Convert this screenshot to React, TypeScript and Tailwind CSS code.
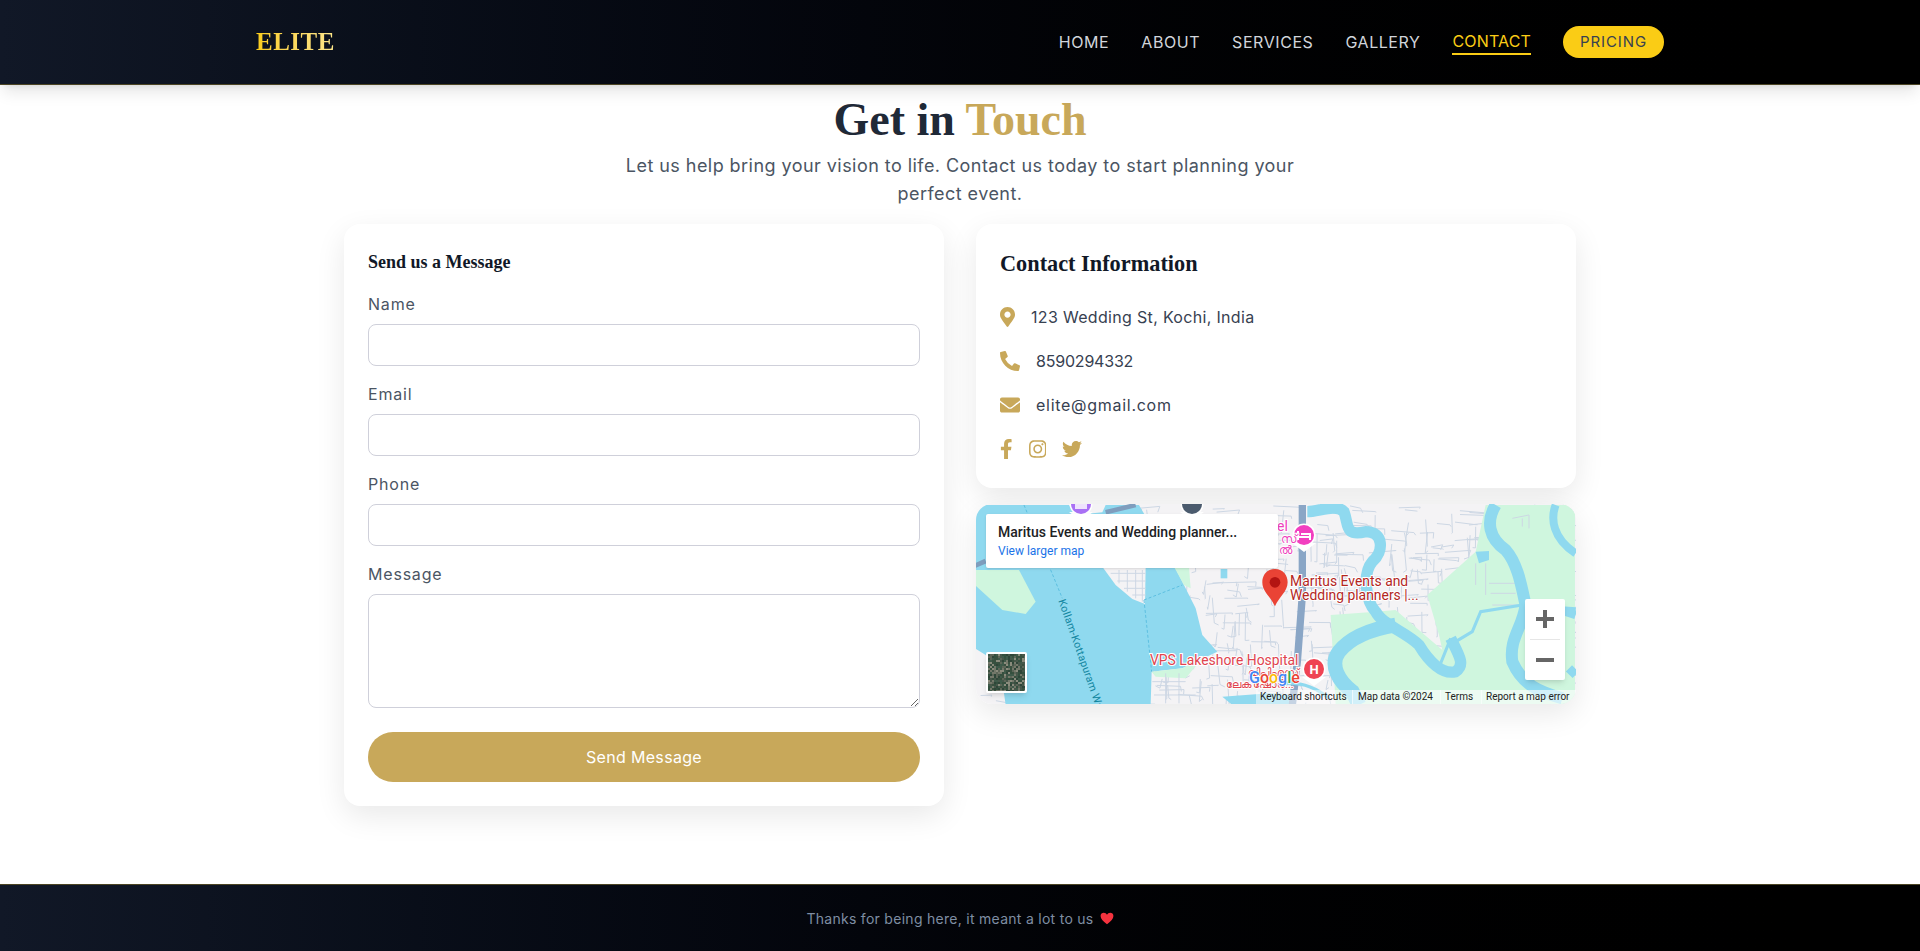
import React from "react";
import { FaMapMarkerAlt, FaPhoneAlt, FaEnvelope, FaFacebookF, FaInstagram, FaTwitter } from "react-icons/fa";

const LAND = "#f4f3f5";
const WATER = "#8fd9ef";
const GREEN = "#cff6de";
const ROAD = "#cdd7e4";

function rng(seed: number) {
  let s = seed;
  return () => {
    s = (s * 16807) % 2147483647;
    return s / 2147483647;
  };
}

function streets() {
  const r = rng(4242);
  const out: string[] = [];
  for (let i = 0; i < 720; i++) {
    const x = r() * 600;
    const y = r() * 200;
    const len = 8 + r() * 20;
    const horizontal = r() > 0.5;
    const a = (r() - 0.5) * 5;
    const x2 = horizontal ? x + len : x + a;
    const y2 = horizontal ? y + a : y + len;
    const x3 = x2 + (horizontal ? a : 5 * (r() - 0.5) * 2);
    const y3 = y2 + (horizontal ? 6 * r() : a);
    out.push(`M${x.toFixed(1)},${y.toFixed(1)}L${x2.toFixed(1)},${y2.toFixed(1)}L${x3.toFixed(1)},${y3.toFixed(1)}`);
  }
  return out.join("");
}

function Pin({ cx, cy, fill, children }: { cx: number; cy: number; fill: string; children?: React.ReactNode }) {
  return (
    <g>
      <path d={`M${cx - 12},${cy + 8} L${cx},${cy + 17} L${cx + 12},${cy + 8} Z`} fill="#fff" />
      <circle cx={cx} cy={cy} r="11.5" fill="#fff" />
      <circle cx={cx} cy={cy} r="10" fill={fill} />
      {children}
    </g>
  );
}

function Satellite() {
  const r = rng(77);
  const cols = ["#3f5a4a", "#5d6658", "#34503f", "#74786a", "#47574a", "#39503f", "#8a8b7c", "#2f4639"];
  const cells: React.ReactNode[] = [];
  for (let y = 0; y < 38; y += 2) {
    for (let x = 0; x < 38; x += 2) {
      cells.push(<rect key={`${x}-${y}`} x={x} y={y} width="2" height="2" fill={cols[Math.floor(r() * cols.length)]} />);
    }
  }
  return (
    <svg width="37" height="37" viewBox="0 0 37 37" className="block">
      {cells}
    </svg>
  );
}

function MapPicture() {
  const sans = "Roboto, 'Liberation Sans', 'Noto Sans', sans-serif";
  return (
    <svg width="600" height="200" viewBox="0 0 600 200" className="block" fontFamily={sans}>
      <rect width="600" height="200" fill={LAND} />
      <path d={streets()} fill="none" stroke={ROAD} strokeWidth="1" />
      {/* left half */}
      <g transform="translate(-7,-9) scale(0.3333)">
        <path
          d="M18,30 L510,30 L620,220 L645,270 L680,340 L700,420 L745,470 L640,520 L548,530 L545,630 L110,630 L100,560 L50,480 L18,460 Z"
          fill={WATER}
        />
        <path d="M300,30 L410,30 L400,52 L320,60 Z" fill={LAND} />
        <path d="M18,225 L150,225 L200,320 L170,357 L100,345 L18,270 Z" fill={GREEN} />
        <path d="M615,215 L660,215 L665,280 L645,270 Z" fill={GREEN} />
        <path d="M548,530 L640,520 L700,490 L650,550 L560,545 Z" fill={GREEN} />
        <path d="M400,215 L530,215 L528,327 L490,312 L440,270 Z" fill={LAND} />
        <path d="M425,235H530M445,258H530M465,280H530M490,300H530M450,225V265M475,225V290M500,225V310M520,225V320" stroke={ROAD} strokeWidth="3" fill="none" />
        <path d="M550,560H650M590,535V625M630,535V625M555,600H680" stroke={ROAD} strokeWidth="3" fill="none" />
        <path d="M165,30 L280,310 M525,315 L640,270 M525,315 L548,530" stroke="#5cbfe0" strokeWidth="3" strokeDasharray="9 6" fill="none" />
        <path d="M410,52 L500,30" stroke="#7f9dbd" strokeWidth="14" fill="none" />
        <path d="M18,212 L50,198" stroke="#7f9dbd" strokeWidth="14" fill="none" />
        <path d="M760,605 L900,595 L960,600 L960,630 L790,630 Z" fill={WATER} />
        <rect x="755" y="222" width="20" height="28" fill={WATER} />
        <g transform="translate(268,317) rotate(70.5)">
          <text fontSize="32" fill="#12869f" letterSpacing="1">
            Kollam-Kottapuram Water
          </text>
        </g>
      </g>
      {/* right half */}
      <g transform="translate(293,-9) scale(0.3333)">
        <path d="M475,300 L620,170 L650,30 L918,30 L918,630 L200,630 L185,360 L320,350 L380,345 L520,465 L510,420 Z" fill={GREEN} />
        <path d="M620,170 L660,168 L660,195 L630,205 Z" fill={WATER} />
        <path d="M620,205V270M650,205V300M660,265H740M665,295H740M670,330H745" stroke={ROAD} strokeWidth="3" fill="none" />
        <path d="M730,70L780,60V100M760,70V95" stroke={ROAD} strokeWidth="3" fill="none" />
        <path d="M100,30 L100,300 L85,500 L70,630" stroke="#8aa6c6" strokeWidth="22" fill="none" />
        <path
          d="M115,50 C150,50 200,25 225,50 C240,90 225,125 290,110 C345,110 345,170 310,200 C280,235 290,320 320,350 C340,390 410,410 450,450 C480,500 520,540 560,530 C590,510 570,480 545,430"
          fill="none"
          stroke={WATER}
          strokeWidth="34"
        />
        <path d="M380,390 C320,400 250,420 210,470 C180,510 210,560 250,590 L270,630" fill="none" stroke={WATER} strokeWidth="44" />
        <path d="M505,530 L545,430 M560,440 L610,410 L635,350 L760,330" fill="none" stroke={WATER} strokeWidth="9" />
        <path
          d="M680,30 C650,80 660,130 710,165 C750,210 760,290 770,330 C760,400 720,430 730,500 C760,570 810,590 880,610"
          fill="none"
          stroke={WATER}
          strokeWidth="36"
        />
        <path d="M860,30 C845,70 850,130 920,175" fill="none" stroke={WATER} strokeWidth="24" />
        <path d="M890,350 L920,360 M900,520 L920,540 M780,340 L920,350" fill="none" stroke={WATER} strokeWidth="26" />
        <path d="M0,575 C60,555 120,560 180,610" fill="none" stroke={WATER} strokeWidth="10" />
      </g>
      {/* pins */}
      <Pin cx={105} cy={0} fill="#a970f5">
        <path d="M99,-2h12v7h-12z" fill="#fff" opacity="0.8" />
      </Pin>
      <Pin cx={216} cy={0} fill="#4b5b6e" />
      <Pin cx={328} cy={31} fill="#f23fc0">
        <path d="M322,27v9M322,33h12v3M325,30h9v3" stroke="#fff" strokeWidth="2" fill="none" />
      </Pin>
      <Pin cx={338} cy={165} fill="#ef4353">
        <text x={338} y={170} fontSize="13" fontWeight="700" fill="#fff" textAnchor="middle">H</text>
      </Pin>
      {/* labels */}
      <text x={301} y={27} fontSize="14" fill="#ee3fbc" stroke="#fff" strokeWidth="2" paintOrder="stroke">el</text>
      <text x={305} y={39} fontSize="12" fill="#ee3fbc" stroke="#fff" strokeWidth="2" paintOrder="stroke">സ്</text>
      <text x={303} y={50} fontSize="12" fill="#ee3fbc" stroke="#fff" strokeWidth="2" paintOrder="stroke">ൽ</text>
      <text x={174} y={161} fontSize="13.9" fill="#e0444f" stroke="#fff" strokeWidth="2" paintOrder="stroke">
        VPS Lakeshore Hospital
      </text>
      <text x={272} y={172} fontSize="11" fill="#e0444f" stroke="#fff" strokeWidth="2" paintOrder="stroke">വിപിഎസ്</text>
      <text x={250} y={184} fontSize="11" fill="#e0444f" stroke="#fff" strokeWidth="2" paintOrder="stroke">ലേക്‌ഷോർ...</text>
      <text x={314} y={82} fontSize="13.9" fill="#b3261e" stroke="#fff" strokeWidth="2" paintOrder="stroke">
        Maritus Events and
      </text>
      <text x={314} y={96} fontSize="13.9" fill="#b3261e" stroke="#fff" strokeWidth="2" paintOrder="stroke">
        Wedding planners |...
      </text>
      {/* marker */}
      <g transform="translate(-7,-9) scale(0.3333)">
        <path d="M918,222 C892,222 880,242 880,262 C880,290 905,305 918,334 C931,305 956,290 956,262 C956,242 944,222 918,222 Z" fill="#ea4335" />
        <circle cx="918" cy="262" r="16" fill="#b31412" />
      </g>
      {/* google */}
      <text x={273} y={179} fontSize="16" fontWeight="500" stroke="#fff" strokeWidth="1.5" paintOrder="stroke">
        <tspan fill="#4285f4">G</tspan>
        <tspan fill="#ea4335">o</tspan>
        <tspan fill="#fbbc05">o</tspan>
        <tspan fill="#4285f4">g</tspan>
        <tspan fill="#34a853">l</tspan>
        <tspan fill="#ea4335">e</tspan>
      </text>
    </svg>
  );
}

function MapCard() {
  return (
    <div className="relative h-[200px] overflow-hidden rounded-2xl shadow-[0_10px_30px_rgba(0,0,0,0.09)] font-['Roboto',sans-serif]">
      <MapPicture />
      <div className="absolute left-[10px] top-[10px] h-[54px] w-[292px] rounded-[2px] bg-white px-[12px] pt-[9px] shadow-sm">
        <div className="text-[14px] leading-[18px] font-medium text-[#202124]">Maritus Events and Wedding planner...</div>
        <div className="pt-px text-[12px] leading-[18px] text-[#1a73e8]">View larger map</div>
      </div>
      <div className="absolute left-[10px] top-[148px] h-[41px] w-[41px] rounded-[2px] border-2 border-white shadow-md">
        <Satellite />
      </div>
      <div className="absolute left-[549px] top-[95px] flex h-[81px] w-[40px] flex-col items-center rounded-[2px] bg-white shadow-md">
        <svg width="40" height="40" viewBox="0 0 40 40">
          <path d="M11 18h18v4H11zM18 11h4v18h-4z" fill="#666" />
        </svg>
        <div className="h-px w-[30px] bg-[#e6e6e6]" />
        <svg width="40" height="40" viewBox="0 0 40 40">
          <path d="M11 18h18v4H11z" fill="#666" />
        </svg>
      </div>
      <div className="absolute bottom-0 left-[280px] right-0 flex h-[14px] items-center text-[10px] leading-[14px] text-[#222]">
        <span className="w-[96px] pl-[4px] bg-white/50 whitespace-nowrap">Keyboard shortcuts</span>
        <span className="w-[88px] pl-[5px] bg-white/60 border-l border-white/60 whitespace-nowrap">Map data ©2024</span>
        <span className="w-[41px] pl-[4px] bg-white/60 border-l border-white/60">Terms</span>
        <span className="flex-1 pl-[4px] bg-white/60 border-l border-white/60 whitespace-nowrap">Report a map error</span>
      </div>
    </div>
  );
}

function Field({ label, area }: { label: string; area?: boolean }) {
  return (
    <div>
      <label className="mb-[8px] block text-[16px] leading-[24px] tracking-[0.05em] text-[#4b5563]">{label}</label>
      {area ? (
        <textarea className="mb-[24px] block h-[114px] w-full rounded-lg border border-[#cfd0da] bg-white" />
      ) : (
        <input className="mb-[16px] block h-[42px] w-full rounded-lg border border-[#cfd0da] bg-white" />
      )}
    </div>
  );
}

const navItems = ["HOME", "ABOUT", "SERVICES", "GALLERY"];
const cardShadow = "shadow-[0_10px_30px_rgba(0,0,0,0.09)]";

export default function App() {
  return (
    <div className="flex min-h-screen flex-col bg-white font-['Inter',sans-serif]">
      <header className="relative z-10 h-[85px] border-b border-[#4b4423] bg-gradient-to-r from-[#111827] to-black shadow-lg">
        <div className="mx-auto flex h-[84px] max-w-[1408px] items-center justify-between">
          <div className="bg-gradient-to-r from-[#facc15] to-[#fde68a] bg-clip-text font-['Liberation_Serif',serif] text-[25px] font-bold tracking-[0.02em] text-transparent">
            ELITE
          </div>
          <nav className="flex items-center gap-8 text-[16px] tracking-[0.035em]">
            {navItems.map((n) => (
              <a key={n} className="text-[#d1d5db]">{n}</a>
            ))}
            <a className="border-b-2 border-[#facc15] leading-[24px] tracking-[0.01em] text-[#facc15]">CONTACT</a>
            <a className="flex h-[32px] w-[101px] items-center justify-center rounded-full bg-[#facc15] text-[15px] tracking-[0.06em] text-[#374151]">PRICING</a>
          </nav>
        </div>
      </header>

      <main className="flex-1 pb-[78px]">
        <div className="pt-[11px] text-center">
          <h1 className="font-['Liberation_Serif',serif] text-[46px] leading-[48px] font-bold text-[#1f2937]">
            Get in <span className="text-[#c8a85a]">Touch</span>
          </h1>
          <p className="mx-auto mt-[8px] max-w-[672px] text-[18px] leading-[28px] tracking-[0.025em] text-[#4b5563]">
            Let us help bring your vision to life. Contact us today to start planning your perfect event.
          </p>
        </div>

        <div className="mx-auto mt-[16px] grid w-[1232px] grid-cols-[600px_600px] gap-x-[32px]">
          <section className={`rounded-2xl bg-white px-6 pt-6 pb-6 ${cardShadow}`}>
            <h3 className="mb-[16px] font-['Liberation_Serif',serif] text-[18px] leading-[28px] font-semibold text-[#111827]">
              Send us a Message
            </h3>
            <Field label="Name" />
            <Field label="Email" />
            <Field label="Phone" />
            <Field label="Message" area />
            <button className="h-[50px] w-full rounded-full bg-[#c8a85a] text-[16px] tracking-[0.02em] text-white">Send Message</button>
          </section>

          <div className="flex flex-col gap-4">
            <section className={`h-[264px] rounded-2xl bg-white px-6 pt-6 ${cardShadow}`}>
              <h3 className="mb-[25px] font-['Liberation_Serif',serif] text-[22.3px] leading-[32px] font-semibold text-[#111827]">
                Contact Information
              </h3>
              <div className="flex flex-col gap-5 text-[16px] leading-[24px] text-[#374151]">
                <div className="flex items-center gap-4">
                  <FaMapMarkerAlt className="h-[20px] w-[15px] text-[#c8a85a]" />
                  <span className="tracking-[0.02em]">123 Wedding St, Kochi, India</span>
                </div>
                <div className="flex items-center gap-4">
                  <FaPhoneAlt className="text-[20px] text-[#c8a85a]" />
                  <span className="tracking-[-0.0125em]">8590294332</span>
                </div>
                <div className="flex items-center gap-4">
                  <FaEnvelope className="text-[20px] text-[#c8a85a]" />
                  <span className="tracking-[0.045em]">elite@gmail.com</span>
                </div>
                <div className="flex h-[24px] items-center gap-4 text-[#c8a85a]">
                  <FaFacebookF className="h-[20px] w-[12.5px]" />
                  <FaInstagram className="h-[20px] w-[17.5px]" />
                  <FaTwitter className="h-[20px] w-[20px]" />
                </div>
              </div>
            </section>
            <MapCard />
          </div>
        </div>
      </main>

      <footer className="flex h-[68px] items-center justify-center gap-[6px] border-t border-[#4b4423] bg-gradient-to-r from-[#111827] to-black text-[14px] tracking-[0.02em] text-[#7f8ea3]">
        <span>Thanks for being here, it meant a lot to us</span>
        <svg width="14" height="13" viewBox="0 0 24 22">
          <path d="M12 21 C5 15 1 11 1 6.5 C1 3 3.5 1 6.5 1 C9 1 11 2.5 12 4.5 C13 2.5 15 1 17.5 1 C20.5 1 23 3 23 6.5 C23 11 19 15 12 21 Z" fill="#f5333f" />
        </svg>
      </footer>
    </div>
  );
}
